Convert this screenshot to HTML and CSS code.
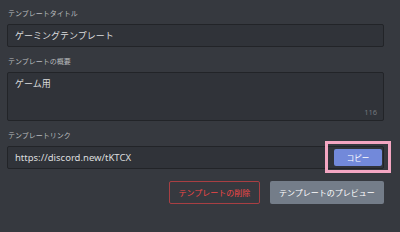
FILE: index.html
```html
<!DOCTYPE html>
<html lang="ja">
  <head>
    <meta charset="UTF-8" />
    <meta name="viewport" content="width=device-width, initial-scale=1.0" />
    <title>テンプレート</title>
    <link rel="stylesheet" href="styles.css">
  </head>
  <body>
    <div class="form">
      <div class="field">
        <div class="label">テンプレートタイトル</div>
        <div class="input">ゲーミングテンプレート</div>
      </div>
      <div class="field">
        <div class="label">テンプレートの概要</div>
        <div class="textarea">
          ゲーム用
          <span class="count">116</span>
        </div>
      </div>
      <div class="field">
        <div class="label">テンプレートリンク</div>
        <div class="input link">
          <span class="url">https://discord.new/tKTCX</span>
          <span class="copy-wrap"><button class="copy">コピー</button></span>
        </div>
      </div>
      <div class="actions">
        <button class="btn delete">テンプレートの削除</button>
        <button class="btn preview">テンプレートのプレビュー</button>
      </div>
    </div>
  </body>
</html>
```

FILE: styles.css
```css
body {
  margin: 0;
  background-color: #36393f;
  font-family: "Noto Sans", "Noto Sans CJK JP", sans-serif;
  color: #dcddde;
}
.form {
  width: 377px;
  padding: 9px 0 0 7px;
}
.field {
  margin-bottom: 10px;
}
.label {
  height: 10px;
  line-height: 10px;
  font-size: 7px;
  color: #b9bbbe;
  padding-left: 1px;
  margin-bottom: 5px;
}
.input {
  box-sizing: border-box;
  height: 23px;
  display: flex;
  align-items: center;
  padding: 0 7px;
  background-color: #303339;
  border: 1px solid #222428;
  border-radius: 2px;
  font-size: 9px;
}
.textarea {
  box-sizing: border-box;
  position: relative;
  height: 49px;
  padding: 4px 7px;
  background-color: #303339;
  border: 1px solid #222428;
  border-radius: 2px;
  font-size: 9px;
  line-height: 13px;
}
.count {
  position: absolute;
  right: 6px;
  bottom: 4px;
  font-size: 7.5px;
  line-height: 8px;
  color: #72767d;
}
.link {
  justify-content: space-between;
  padding-right: 1px;
}
.url {
  font-size: 9.5px;
}
.copy-wrap {
  position: relative;
  display: flex;
}
.copy-wrap::after {
  content: "";
  position: absolute;
  top: -8px;
  bottom: -7px;
  left: -9px;
  right: -9px;
  border: 3px solid #f3a6c2;
}
.copy {
  width: 48px;
  height: 17px;
  padding: 0;
  border: none;
  border-radius: 2px;
  background-color: #7289da;
  color: #fff;
  font-family: inherit;
  font-size: 7.5px;
}
.actions {
  display: flex;
  justify-content: flex-end;
  gap: 10px;
  margin-top: 12px;
}
.btn {
  box-sizing: border-box;
  height: 23px;
  padding: 0;
  border-radius: 2px;
  font-family: inherit;
  font-size: 8px;
}
.delete {
  width: 91px;
  background: transparent;
  border: 1px solid #a83f43;
  color: #f04747;
}
.preview {
  width: 114px;
  background-color: #747d89;
  border: none;
  color: #fff;
}
```
